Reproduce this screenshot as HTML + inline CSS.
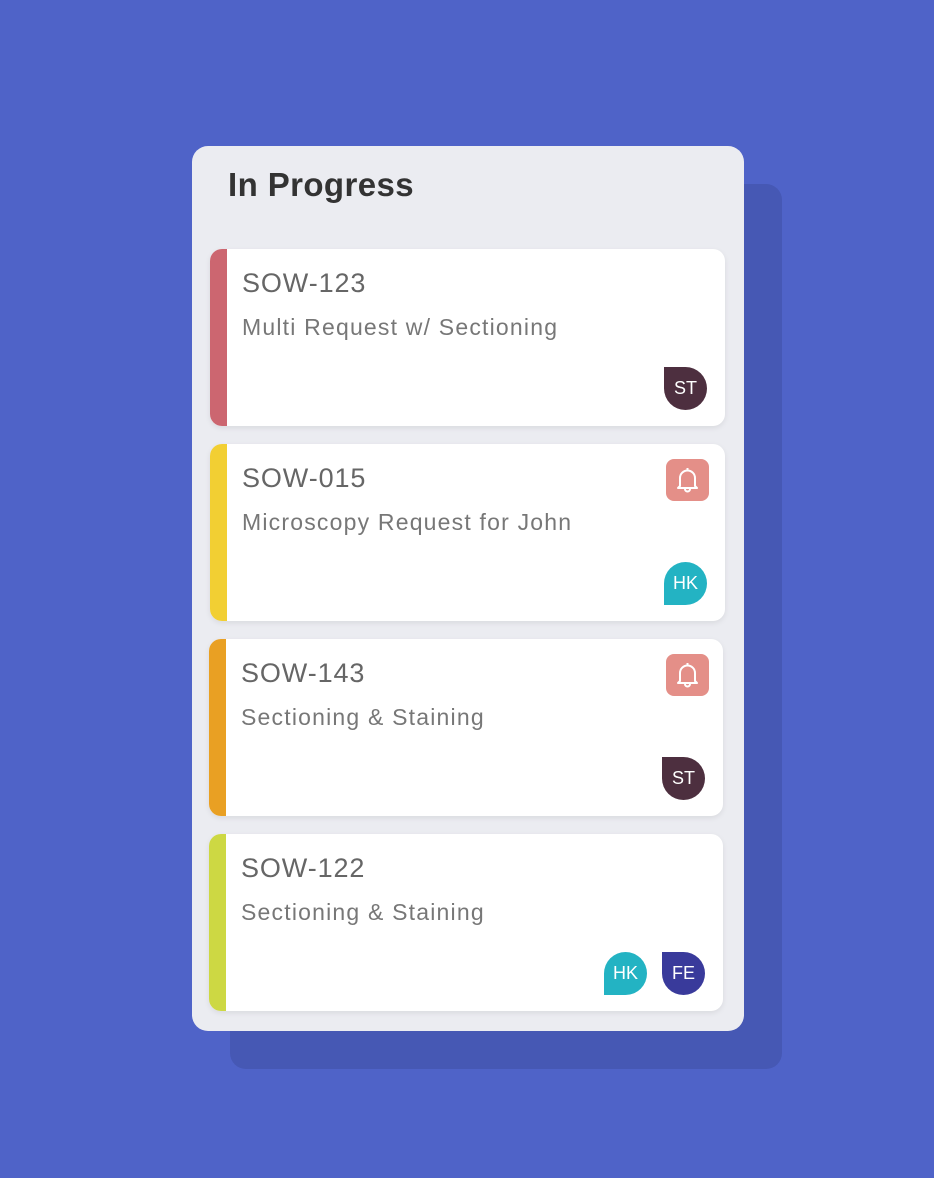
<!DOCTYPE html><html><head><style>
body{margin:0;width:934px;height:1178px;background:#4f63c8;position:relative;overflow:hidden;font-family:"Liberation Sans",sans-serif}
.sh{position:absolute;left:230px;top:184px;width:552px;height:885px;background:#4658b4;border-radius:16px}
.panel{position:absolute;left:192px;top:146px;width:552px;height:885px;background:#ebecf1;border-radius:16px}
h1{position:absolute;left:228px;top:166px;margin:0;font-size:33px;font-weight:bold;color:#333;letter-spacing:0.4px}
.card{position:absolute;width:515px;height:177px;background:#fff;border-radius:12px;overflow:hidden;box-shadow:0 2px 6px rgba(0,0,0,.08)}
.card .bar{position:absolute;left:0;top:0;bottom:0;width:17px}
.t{position:absolute;left:32px;top:19px;font-size:27px;color:#666;letter-spacing:0.9px}
.s{position:absolute;left:32px;top:65px;font-size:23px;color:#777;letter-spacing:1.2px}
.av{position:absolute;width:43px;height:43px;color:#fff;font-size:18px;display:flex;align-items:center;justify-content:center}
.a1{border-radius:0 50% 50% 50%}.a2{border-radius:50% 50% 50% 0}
.bell{position:absolute;width:43px;height:42px;background:#e48f88;border-radius:8px;top:15px;left:456px}
</style></head><body>
<div class="sh"></div><div class="panel"></div>
<h1>In Progress</h1>
<div class="card" style="left:210px;top:249px"><div class="bar" style="background:#cc6670"></div><div class="t">SOW-123</div><div class="s">Multi Request w/ Sectioning</div><div class="av a1" style="left:454px;top:118px;background:#4d2f3f">ST</div></div>
<div class="card" style="left:210px;top:444px"><div class="bar" style="background:#f2cf33"></div><div class="t">SOW-015</div><div class="s">Microscopy Request for John</div>
<div class="bell"><svg width="43" height="42" viewBox="0 0 43 42"><path d="M21.5 9v2M14 27v-8a7.5 7.5 0 0 1 15 0v8l2 2H12z M19 30a2.5 2.5 0 0 0 5 0" fill="none" stroke="#fff" stroke-width="2" stroke-linejoin="round"/></svg></div>
<div class="av a2" style="left:454px;top:118px;background:#23b3c3">HK</div></div>
<div class="card" style="left:209px;top:639px;width:514px"><div class="bar" style="background:#e9a023"></div><div class="t">SOW-143</div><div class="s">Sectioning &amp; Staining</div>
<div class="bell" style="left:457px"><svg width="43" height="42" viewBox="0 0 43 42"><path d="M21.5 9v2M14 27v-8a7.5 7.5 0 0 1 15 0v8l2 2H12z M19 30a2.5 2.5 0 0 0 5 0" fill="none" stroke="#fff" stroke-width="2" stroke-linejoin="round"/></svg></div>
<div class="av a1" style="left:453px;top:118px;background:#4d2f3f">ST</div></div>
<div class="card" style="left:209px;top:834px;width:514px"><div class="bar" style="background:#cdd843"></div><div class="t">SOW-122</div><div class="s">Sectioning &amp; Staining</div>
<div class="av a2" style="left:395px;top:118px;background:#23b3c3">HK</div><div class="av a1" style="left:453px;top:118px;background:#393a9b">FE</div></div>
</body></html>
